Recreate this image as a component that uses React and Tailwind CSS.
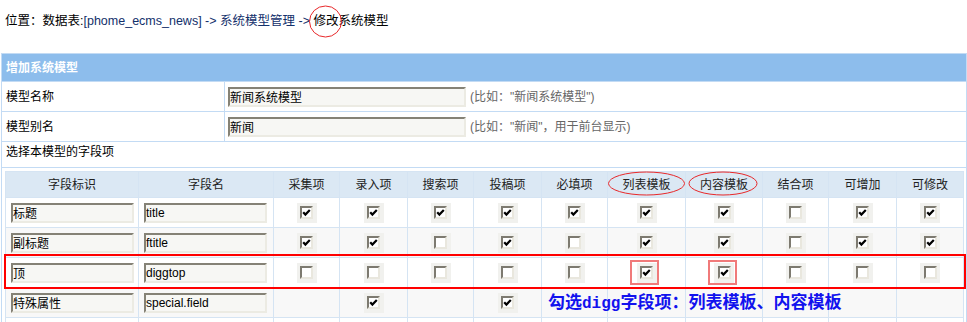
const cols = ["采集项", "录入项", "搜索项", "投稿项", "必填项", "列表模板", "内容模板", "结合项", "可增加", "可修改"];

const rows = [
  { label: "标题", name: "title", checks: [1, 1, 1, 1, 1, 1, 1, 0, 1, 1], bg: "bg-white" },
  { label: "副标题", name: "ftitle", checks: [1, 1, 0, 1, 0, 1, 1, 0, 1, 1], bg: "bg-[#f8f8f8]" },
  { label: "顶", name: "diggtop", checks: [0, 0, 0, 0, 0, 1, 1, 0, 0, 0], bg: "bg-white" },
  { label: "特殊属性", name: "special.field", checks: [null, 1, null, 1, null, null, null, null, null, null], bg: "bg-[#f8f8f8]" },
  { label: "", name: "", checks: [null, null, null, null, null, null, null, null, null, null], bg: "bg-white" },
];

const Check = ({ on }) => (
  <span className="flex h-5 w-5 items-center justify-center bg-[#f1f1ee]">
    <span className="flex h-[13px] w-[13px] items-center justify-center border-2 border-t-[#7d7a70] border-l-[#7d7a70] border-r-[#e9e7de] border-b-[#e9e7de] bg-white">
      {on ? (
        <svg width="9" height="9" viewBox="0 0 9 9">
          <polyline points="1.2,4.2 3.4,6.6 7.8,2" fill="none" stroke="#000" strokeWidth="2.2" />
        </svg>
      ) : null}
    </span>
  </span>
);

const Field = ({ value, className }) => (
  <input
    readOnly
    value={value}
    className={`h-5 border-2 border-t-[#858276] border-l-[#858276] border-r-[#ecebe3] border-b-[#ecebe3] bg-[#f7f7f4] px-0 text-[12px] leading-[16px] text-black outline-none ${className}`}
  />
);

const App = () => {
  return (
    <div className="relative h-[322px] w-[967px] overflow-hidden bg-white font-['Liberation_Sans','Noto_Sans_CJK_SC',sans-serif] text-[12px] text-black">
      <div className="h-[53px] px-[5px] pt-[13px] text-[12.5px] leading-[17px]">
        位置：数据表:<span className="text-[#12306b]">[phome_ecms_news] -&gt; 系统模型管理 -&gt; </span>修改系统模型
      </div>

      <div className="ml-px flex w-[966px] flex-col gap-px bg-[#c3dbf4] p-px">
        <div className="flex h-[27px] items-center bg-[#8dbdec] pl-[4px] font-bold text-white">增加系统模型</div>

        <div className="grid h-[29px] grid-cols-[222px_1fr] gap-x-px">
          <div className="flex items-center bg-white pl-[4px]">模型名称</div>
          <div className="flex items-center bg-white pl-[3px]">
            <Field value="新闻系统模型" className="w-[238px]" />
            <span className="ml-[4px] text-[#666]">(比如："新闻系统模型")</span>
          </div>
        </div>

        <div className="grid h-[29px] grid-cols-[222px_1fr] gap-x-px">
          <div className="flex items-center bg-white pl-[4px]">模型别名</div>
          <div className="flex items-center bg-white pl-[3px]">
            <Field value="新闻" className="w-[238px]" />
            <span className="ml-[4px] text-[#666]">(比如："新闻"，用于前台显示)</span>
          </div>
        </div>

        <div className="flex h-[25px] items-center bg-white pb-[5px] pl-[4px]">选择本模型的字段项</div>

        <div className="bg-white pl-[3px] pt-[3px]">
          <div className="grid w-[959px] grid-cols-[132px_134px_65px_67px_65px_67px_65px_77px_76px_65px_67px_66px] gap-px bg-[#d5e4f3] p-px">
            <div className="flex h-[25px] items-center justify-center bg-[#dbe8f4] text-[#222]">字段标识</div>
            <div className="flex h-[25px] items-center justify-center bg-[#dbe8f4] text-[#222]">字段名</div>
            {cols.map((c) => (
              <div key={c} className="flex h-[25px] items-center justify-center bg-[#dbe8f4] text-[#222]">
                {c}
              </div>
            ))}
            {rows.map((r, i) => (
              <div key={i} className="contents">
                <div className={`flex h-[29px] items-center pl-[5px] ${r.bg}`}>
                  <Field value={r.label} className="w-[123px]" />
                </div>
                <div className={`flex h-[29px] items-center pl-[5px] ${r.bg}`}>
                  <Field value={r.name} className="w-[123px]" />
                </div>
                {r.checks.map((v, j) => (
                  <div key={j} className={`flex h-[29px] items-center justify-center ${r.bg}`}>
                    {v === null ? null : <Check on={v === 1} />}
                  </div>
                ))}
              </div>
            ))}
          </div>
        </div>
      </div>

      {/* annotations */}
      <svg className="pointer-events-none absolute left-0 top-0" width="967" height="322">
        <ellipse cx="325.5" cy="21.5" rx="16" ry="15.5" fill="none" stroke="#e8282a" strokeWidth="1" />
        <ellipse cx="646.5" cy="183.5" rx="38" ry="11.5" fill="none" stroke="#e8282a" strokeWidth="1" />
        <ellipse cx="723" cy="183.5" rx="34" ry="11.5" fill="none" stroke="#e8282a" strokeWidth="1" />
        <rect x="631" y="261" width="27" height="23" fill="none" stroke="#f07a7a" strokeWidth="2" />
        <rect x="709" y="261" width="27" height="23" fill="none" stroke="#f07a7a" strokeWidth="2" />
      </svg>
      <div className="pointer-events-none absolute left-[4px] top-[254px] h-[35px] w-[962px] border-2 border-[#ff0000]" />
      <div className="pointer-events-none absolute left-[548px] top-[292px] whitespace-nowrap text-[17px] font-bold leading-[22px] text-[#1212ee]">
        勾选<span className="font-['Liberation_Mono'] text-[16px]">digg</span>字段项：列表模板、内容模板
      </div>
    </div>
  );
};

export default App;
